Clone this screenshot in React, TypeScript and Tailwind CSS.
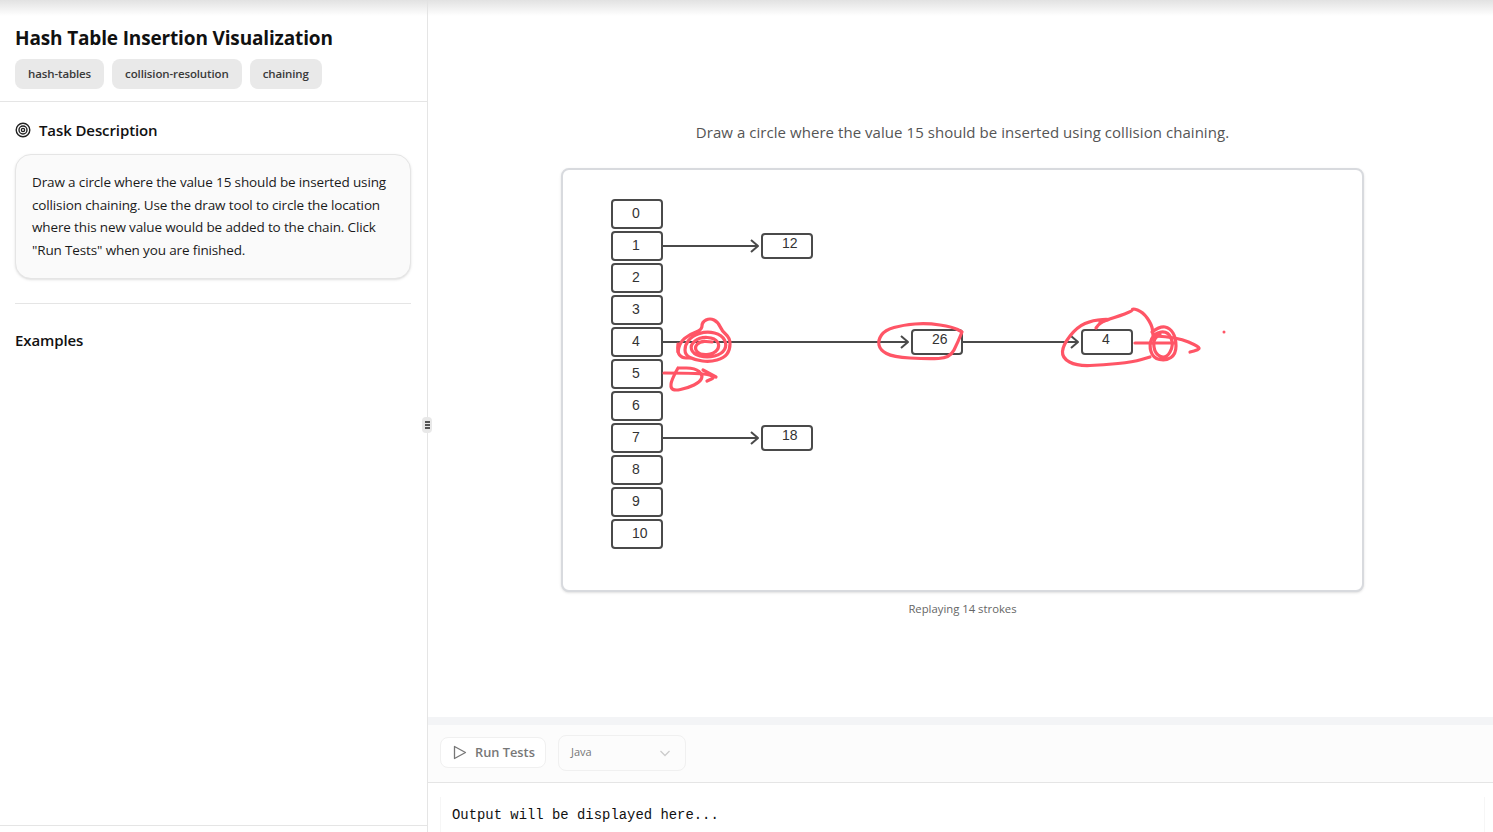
const font = { fontFamily: '"Open Sans", "Noto Sans", sans-serif' }

const cells = ["0", "1", "2", "3", "4", "5", "6", "7", "8", "9", "10"]

const strokes = [
  "M678 352 L679 343 L690 334 L702 330 L702 322 L710 318 L718 322 L722 331 L730 338 L730 350 L724 358 L710 362 L695 360 L685 355 L685 345 L692 336 L707 331 L722 335 L727 345 L722 354 L707 358 L693 354 L690 345 L700 337 L715 338 L720 346 L714 354 L700 355 L694 348 L700 341 L712 342",
  "M678 344 L677 352 L682 358 L690 358",
  "M664 373 L703 373 L716 377 L707 381",
  "M703 370 L716 377",
  "M678 368 L675 373 L670 385 L673 391 L688 388 L700 382 L703 375 L695 368 L678 368",
  "M962 332 L958 342 L950 358 L927 359 L893 357 L880 350 L878 340 L885 330 L903 325 L927 323 L953 327 L962 332",
  "M1096 328 L1100 322 L1112 319 L1093 320 L1077 327 L1063 345 L1062 358 L1077 366 L1103 365 L1133 362 L1150 357",
  "M1100 322 L1133 312 L1132 308 L1143 312 L1152 325 L1153 335",
  "M1152 332 L1160 326 L1170 328 L1176 338 L1176 354 L1166 361 L1153 358 L1149 345 L1154 333 L1168 331 L1174 345 L1166 359 L1155 354 L1153 340 L1160 334",
  "M1135 343 L1175 343",
  "M1155 336 L1177 337 L1200 347 L1198 350 L1190 352",
]

// rounds the corners of a hand drawn stroke
function smooth(d: string) {
  const n = d.match(/\d+/g)!.map(Number)
  const pts: number[][] = []
  for (let i = 0; i < n.length; i += 2) pts.push([n[i], n[i + 1]])
  if (pts.length < 3) return d
  let out = `M${pts[0][0]} ${pts[0][1]}`
  for (let i = 1; i < pts.length - 1; i++) {
    const mx = (pts[i][0] + pts[i + 1][0]) / 2
    const my = (pts[i][1] + pts[i + 1][1]) / 2
    out += ` Q${pts[i][0]} ${pts[i][1]} ${mx} ${my}`
  }
  const last = pts[pts.length - 1]
  return out + ` L${last[0]} ${last[1]}`
}

function Tag({ label }: { label: string }) {
  return (
    <span className="flex h-[30px] items-center rounded-lg bg-[#e9e9e9] px-[13px] text-[11.5px] font-semibold tracking-[-0.12px] text-[#3a3a3a]">
      {label}
    </span>
  )
}

function Diagram() {
  const arrow = (x1: number, x2: number, y: number) => (
    <g fill="none" stroke="#4a4a4a" strokeWidth="2" strokeLinejoin="round">
      <line x1={x1} y1={y} x2={x2} y2={y} />
      <path d={`M${x2 - 7} ${y - 6} L${x2} ${y} L${x2 - 7} ${y + 6}`} />
    </g>
  )
  const node = (x: number, y: number, h: number, label: string) => (
    <g key={`${x}-${y}`}>
      <rect x={x} y={y} width="50" height={h} rx="3" fill="white" stroke="#4a4a4a" strokeWidth="2" />
      <text x={x + 20} y={y + (h === 28 ? 18 : 14)} fontSize="14" fill="#333" fontFamily="Liberation Sans, sans-serif">
        {label}
      </text>
    </g>
  )
  return (
    <svg width="798" height="418" viewBox="563 170 798 418">
      {cells.map((c, i) => node(612, 200 + i * 32, 28, c))}
      {arrow(662, 758, 246)}
      {arrow(662, 758, 438)}
      {arrow(662, 908, 342)}
      {arrow(962, 1078, 342)}
      {node(762, 234, 24, "12")}
      {node(762, 426, 24, "18")}
      {node(912, 330, 24, "26")}
      {node(1082, 330, 24, "4")}
      <g fill="none" stroke="#ff5566" strokeWidth="3.2" strokeLinecap="round" strokeLinejoin="round">
        {strokes.map((d) => (
          <path key={d} d={smooth(d)} />
        ))}
      </g>
      <circle cx="1224" cy="332" r="1.5" fill="#ff5566" />
    </svg>
  )
}

export default function App() {
  return (
    <div className="relative flex h-[832px] w-[1493px] overflow-hidden bg-white" style={font}>
      <div className="pointer-events-none absolute inset-x-0 top-0 h-4 bg-gradient-to-b from-[#e2e2e2] to-transparent" />

      <aside className="flex w-[428px] shrink-0 flex-col border-r border-[#e5e5e5]">
        <header className="border-b border-[#e5e5e5] px-[15px] pb-3 pt-[25px]">
          <h1 className="text-[19px] font-bold leading-[27px] tracking-[-0.15px] text-[#111]">Hash Table Insertion Visualization</h1>
          <div className="mt-[7px] flex gap-2">
            <Tag label="hash-tables" />
            <Tag label="collision-resolution" />
            <Tag label="chaining" />
          </div>
        </header>
        <div className="flex flex-1 flex-col border-b border-[#e5e5e5] pl-[15px] pr-4">
          <div className="mt-[17px] flex items-center gap-2">
            <svg width="16" height="16" viewBox="0 0 16 16" fill="none" stroke="#222" strokeWidth="1.4">
              <circle cx="8" cy="8" r="6.8" />
              <circle cx="8" cy="8" r="4" />
              <circle cx="8" cy="8" r="1.6" />
            </svg>
            <h2 className="text-[15px] font-semibold leading-[22px] tracking-[-0.1px] text-[#111]">Task Description</h2>
          </div>
          <div className="mt-[13px] rounded-2xl border border-[#e5e5e5] bg-[#fafafa] px-4 py-4 text-[13.5px] leading-[22.7px] tracking-[-0.14px] text-[#1a1a1a] shadow-sm">
            Draw a circle where the value 15 should be inserted using collision chaining. Use the draw tool to circle
            the location where this new value would be added to the chain. Click "Run Tests" when you are finished.
          </div>
          <hr className="mt-6 border-[#e5e5e5]" />
          <h2 className="mt-[25px] text-[15px] font-semibold leading-[22px] tracking-[-0.1px] text-[#111]">Examples</h2>
        </div>
        <div className="h-[6px]" />
      </aside>

      <main className="flex min-w-0 flex-1 flex-col">
        <section className="flex h-[717px] flex-col items-center pl-1 pt-[121px]">
          <p className="text-[15px] leading-[22px] tracking-[0.05px] text-[#555]">
            Draw a circle where the value 15 should be inserted using collision chaining.
          </p>
          <div className="mt-[25px] h-[424px] w-[803px] rounded-lg border-2 border-[#d8dade] bg-white shadow-sm">
            <Diagram />
          </div>
          <p className="mt-[9px] text-[11.3px] leading-4 text-[#666]">Replaying 14 strokes</p>
        </section>
        <div className="h-2 bg-[#f3f4f6]" />
        <div className="flex h-[58px] items-center gap-3 border-b border-[#e5e5e5] bg-[#fcfcfc] px-3 pb-[2px]">
          <button className="flex h-[31px] w-[106px] items-center gap-2 rounded-lg border border-[#f0f0f0] bg-white pl-3 text-[12.8px] font-semibold text-[#777]">
            <svg width="14" height="15" viewBox="0 0 14 15" fill="none" stroke="#777" strokeWidth="1.3" strokeLinejoin="round">
              <path d="M1.5 1.5 L12.5 7.5 L1.5 13.5 Z" />
            </svg>
            Run Tests
          </button>
          <div className="flex h-[36px] w-[128px] items-center justify-between rounded-lg border border-[#f0f0f0] bg-[#fcfcfc] pl-3 pr-[14px] text-[11px] text-[#777]">
            Java
            <svg width="12" height="12" viewBox="0 0 12 12" fill="none" stroke="#ccc" strokeWidth="1.3">
              <path d="M1.5 4 L6 8.5 L10.5 4" />
            </svg>
          </div>
        </div>
        <div className="flex-1 pl-3 pr-2 pt-[14px]">
          <div
            className="h-full border-x border-[#f6f6f6] px-[11px] pt-[10px] text-[13.9px] leading-4 text-[#111]"
            style={{ fontFamily: '"Liberation Mono", monospace' }}
          >
            Output will be displayed here...
          </div>
        </div>
      </main>

      <div className="absolute left-[422px] top-[417px] flex h-4 w-[10px] flex-col items-center justify-center gap-[1px] rounded-sm bg-[#e8e8e8]">
        <span className="h-[2px] w-[5px] bg-[#555]" />
        <span className="h-[2px] w-[5px] bg-[#555]" />
        <span className="h-[2px] w-[5px] bg-[#555]" />
      </div>
    </div>
  )
}
